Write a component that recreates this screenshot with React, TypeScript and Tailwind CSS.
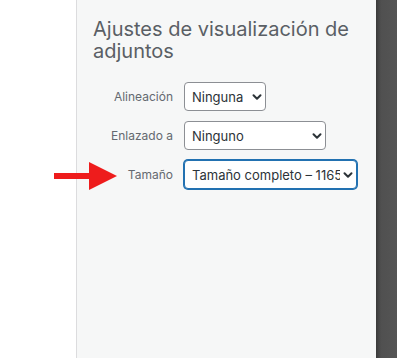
import React from "react";

const FONT = { fontFamily: "Inter, 'Noto Sans', 'Liberation Sans', sans-serif" };

function Chevron() {
  return (
    <svg width="10" height="10" viewBox="0 0 10 10" className="shrink-0">
      <path d="M1.5 3.2 L5 6.7 L8.5 3.2" fill="none" stroke="#2c3338" strokeWidth="2" strokeLinecap="round" strokeLinejoin="round" />
    </svg>
  );
}

function FakeSelect({ value, width, focused }: { value: string; width: string; focused?: boolean }) {
  return (
    <div
      className={`flex h-[29px] items-center gap-[3px] rounded-[4px] border bg-white pl-[7px] pr-[3px] ${width} ${
        focused ? "border-[#2271b1] shadow-[0_0_0_1px_#2271b1]" : "border-[#8c8f94]"
      }`}
    >
      <span className="min-w-0 flex-1 overflow-hidden whitespace-nowrap text-[13px] leading-[18px] text-[#2c3338]">
        {value}
      </span>
      <Chevron />
    </div>
  );
}

const ROWS = [
  { label: "Alineación", value: "Ninguna", width: "w-[82px]" },
  { label: "Enlazado a", value: "Ninguno", width: "w-[142px]" },
  { label: "Tamaño", value: "Tamaño completo – 1165 × 776", width: "w-[173px]", focused: true },
];

export default function App() {
  return (
    <div className="relative flex h-[358px] w-[397px] overflow-hidden bg-white" style={FONT}>
      <div className="w-[76px] shrink-0 bg-white" />
      <div className="flex-1 border-l border-[#dcdcde] bg-[#f6f7f7] pl-[16px] pt-[18px]">
        <h2 className="text-[20px] font-normal leading-[22px] text-[#5a5f65]">
          Ajustes de visualización de adjuntos
        </h2>
        <div className="mt-[20px] flex flex-col gap-[10px]">
          {ROWS.map((row) => (
            <div key={row.label} className="flex items-center gap-[11px]">
              <span className="w-[80px] text-right text-[12px] text-[#646970]">{row.label}</span>
              <FakeSelect value={row.value} width={row.width} focused={row.focused} />
            </div>
          ))}
        </div>
      </div>
      <div className="w-[21px] shrink-0 bg-[linear-gradient(to_right,#3a3a3a,#505050_5px,#555555)]" />

      {/* annotation arrow */}
      <svg className="absolute left-[54px] top-[162px]" width="64" height="28" viewBox="0 0 64 28">
        <rect x="0" y="11" width="37" height="6" fill="#ee1c1c" />
        <polygon points="35,0 63,14 35,28" fill="#ee1c1c" />
      </svg>
    </div>
  );
}
